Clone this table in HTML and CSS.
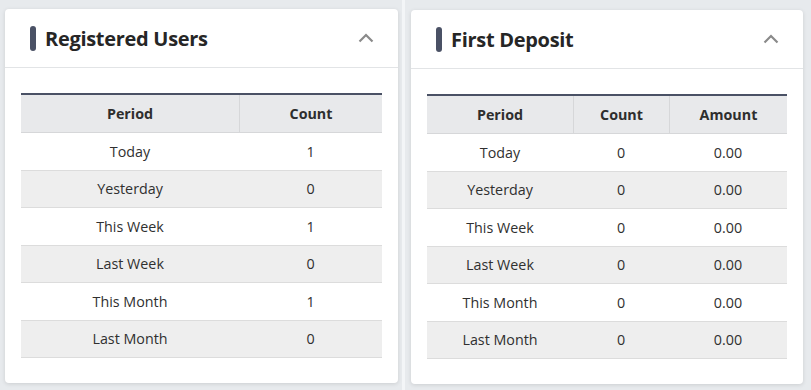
FILE: index.html
```html
<!DOCTYPE html>
<html>
<head>
<meta charset="utf-8">
<link rel="stylesheet" href="styles.css">
</head>
<body>
<div class="page">
  <div class="col col-left">
    <div class="card">
      <div class="card-header">
        <span class="accent"></span>
        <h2 class="title">Registered Users</h2>
        <svg class="chevron" width="16" height="10" viewBox="0 0 16 10"><polyline points="1.5,8.5 8,2 14.5,8.5" fill="none" stroke="#8a8a8a" stroke-width="2.2"/></svg>
      </div>
      <div class="card-body">
        <table class="stats two">
          <thead><tr><th class="c-period">Period</th><th>Count</th></tr></thead>
          <tbody>
            <tr><td>Today</td><td>1</td></tr>
            <tr><td>Yesterday</td><td>0</td></tr>
            <tr><td>This Week</td><td>1</td></tr>
            <tr><td>Last Week</td><td>0</td></tr>
            <tr><td>This Month</td><td>1</td></tr>
            <tr><td>Last Month</td><td>0</td></tr>
          </tbody>
        </table>
      </div>
    </div>
  </div>
  <div class="sep"></div>
  <div class="col col-right">
    <div class="card">
      <div class="card-header">
        <span class="accent"></span>
        <h2 class="title">First Deposit</h2>
        <svg class="chevron" width="16" height="10" viewBox="0 0 16 10"><polyline points="1.5,8.5 8,2 14.5,8.5" fill="none" stroke="#8a8a8a" stroke-width="2.2"/></svg>
      </div>
      <div class="card-body">
        <table class="stats three">
          <thead><tr><th class="c-period">Period</th><th class="c-count">Count</th><th>Amount</th></tr></thead>
          <tbody>
            <tr><td>Today</td><td>0</td><td>0.00</td></tr>
            <tr><td>Yesterday</td><td>0</td><td>0.00</td></tr>
            <tr><td>This Week</td><td>0</td><td>0.00</td></tr>
            <tr><td>Last Week</td><td>0</td><td>0.00</td></tr>
            <tr><td>This Month</td><td>0</td><td>0.00</td></tr>
            <tr><td>Last Month</td><td>0</td><td>0.00</td></tr>
          </tbody>
        </table>
      </div>
    </div>
  </div>
</div>
</body>
</html>
```
FILE: styles.css
```css
html, body {
  margin: 0;
  padding: 0;
}
body {
  background: #e7eaed;
  font-family: "Open Sans", "Noto Sans", sans-serif;
  color: #333;
  width: 811px;
  height: 390px;
  overflow: hidden;
}
.page {
  display: flex;
  height: 390px;
}
.col-left {
  width: 393px;
  padding: 9px 4px 0 5px;
}
.sep {
  width: 3px;
  background: #f3f5f7;
}
.col-right {
  width: 392px;
  padding: 10px 8px 0 6px;
}
.card {
  background: #fff;
  border-radius: 4px;
  box-shadow: 0 1px 4px rgba(0, 0, 0, 0.12);
}
.card-header {
  height: 58px;
  border-bottom: 1px solid #e2e4e6;
  display: flex;
  align-items: center;
  padding: 0 24px 0 25px;
}
.accent {
  width: 6px;
  height: 25px;
  border-radius: 3px;
  background: #4a5165;
  margin-right: 9px;
}
.title {
  margin: 0;
  font-size: 20px;
  font-weight: 700;
  color: #262626;
  flex: 1;
  letter-spacing: -0.3px;
}
.chevron {
  display: block;
}
.card-body {
  padding: 25px 16px 25px 16px;
}
.stats {
  width: 100%;
  border-collapse: separate;
  border-spacing: 0;
  border-top: 2px solid #4a5165;
  font-size: 14.3px;
  line-height: 20px;
  text-align: center;
  table-layout: fixed;
}
.stats th,
.stats td {
  box-sizing: border-box;
  vertical-align: middle;
}
.stats th {
  background: #e8e9eb;
  font-weight: 700;
  height: 38px;
  padding: 1px 8px 0;
  border-bottom: 1px solid #d6d7d9;
  border-left: 1px solid #d6d7d9;
  color: #2e2e2e;
}
.stats th:first-child {
  border-left: none;
}
.stats td {
  height: 37.5px;
  padding: 1px 8px 0;
  border-bottom: 1px solid #dcdcdc;
  color: #303030;
}
.stats tbody tr:nth-child(even) td {
  background: #eeeeee;
}
.two .c-period {
  width: 218px;
}
.three .c-period {
  width: 146px;
}
.three .c-count {
  width: 96px;
}
```
